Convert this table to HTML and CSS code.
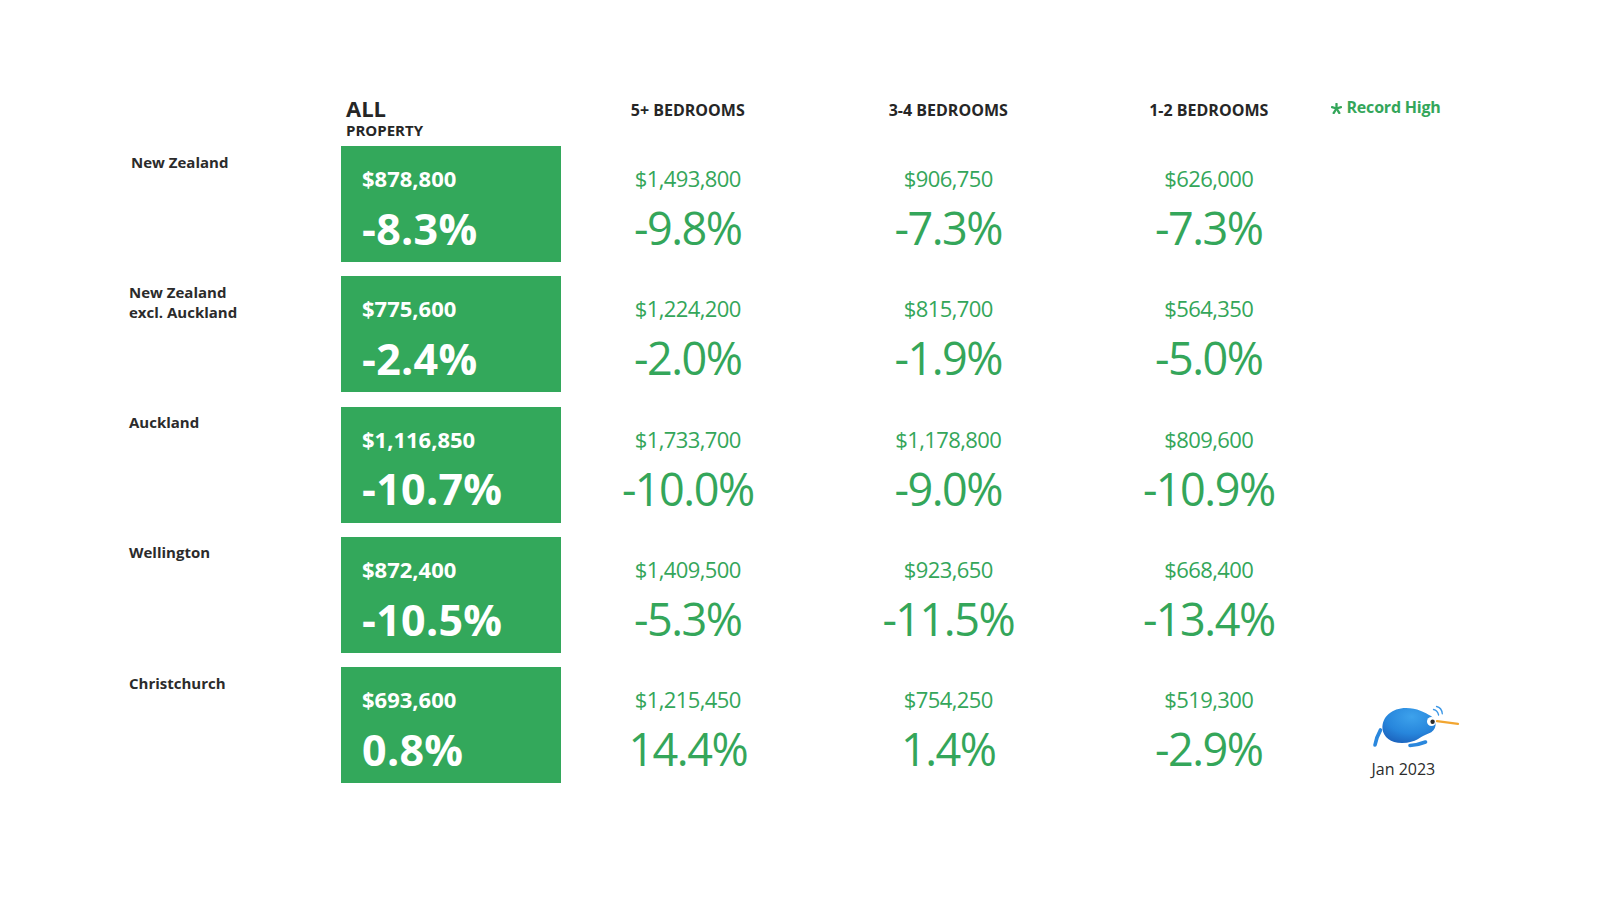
FILE: index.html
```html
<!DOCTYPE html>
<html lang="en">
<head>
<meta charset="utf-8">
<title>Property values by bedrooms</title>
<link rel="stylesheet" href="styles.css">
</head>
<body>
<main class="board">
  <div class="grid head">
    <div></div>
    <div class="all-head">
      <div class="all-title">ALL</div>
      <div class="all-sub">PROPERTY</div>
    </div>
    <div class="col-head">5+ BEDROOMS</div>
    <div class="col-head">3-4 BEDROOMS</div>
    <div class="col-head">1-2 BEDROOMS</div>
    <div class="legend">
      <svg class="star" width="11" height="11" viewBox="0 0 10 10" aria-hidden="true">
        <g stroke="#34a65a" stroke-width="2.1" stroke-linecap="round">
          <line x1="5" y1="5" x2="5" y2="0.8"/>
          <line x1="5" y1="5" x2="9.1" y2="3.7"/>
          <line x1="5" y1="5" x2="0.9" y2="3.7"/>
          <line x1="5" y1="5" x2="7.6" y2="9.1"/>
          <line x1="5" y1="5" x2="2.4" y2="9.1"/>
        </g>
      </svg>
      <span>Record High</span>
    </div>
  </div>

  <div class="grid body">
    <div class="label first">New Zealand</div>
    <div class="box"><div class="box-price">$878,800</div><div class="box-pct">-8.3%</div></div>
    <div class="val"><div class="price">$1,493,800</div><div class="pct">-9.8%</div></div>
    <div class="val"><div class="price">$906,750</div><div class="pct">-7.3%</div></div>
    <div class="val"><div class="price">$626,000</div><div class="pct">-7.3%</div></div>
    <div></div>

    <div class="label">New Zealand<br>excl. Auckland</div>
    <div class="box"><div class="box-price">$775,600</div><div class="box-pct">-2.4%</div></div>
    <div class="val"><div class="price">$1,224,200</div><div class="pct">-2.0%</div></div>
    <div class="val"><div class="price">$815,700</div><div class="pct">-1.9%</div></div>
    <div class="val"><div class="price">$564,350</div><div class="pct">-5.0%</div></div>
    <div></div>

    <div class="label">Auckland</div>
    <div class="box"><div class="box-price">$1,116,850</div><div class="box-pct">-10.7%</div></div>
    <div class="val"><div class="price">$1,733,700</div><div class="pct">-10.0%</div></div>
    <div class="val"><div class="price">$1,178,800</div><div class="pct">-9.0%</div></div>
    <div class="val"><div class="price">$809,600</div><div class="pct">-10.9%</div></div>
    <div></div>

    <div class="label">Wellington</div>
    <div class="box"><div class="box-price">$872,400</div><div class="box-pct">-10.5%</div></div>
    <div class="val"><div class="price">$1,409,500</div><div class="pct">-5.3%</div></div>
    <div class="val"><div class="price">$923,650</div><div class="pct">-11.5%</div></div>
    <div class="val"><div class="price">$668,400</div><div class="pct">-13.4%</div></div>
    <div></div>

    <div class="label">Christchurch</div>
    <div class="box"><div class="box-price">$693,600</div><div class="box-pct">0.8%</div></div>
    <div class="val"><div class="price">$1,215,450</div><div class="pct">14.4%</div></div>
    <div class="val"><div class="price">$754,250</div><div class="pct">1.4%</div></div>
    <div class="val"><div class="price">$519,300</div><div class="pct">-2.9%</div></div>
    <div class="brand">
      <svg class="kiwi" width="90" height="46" viewBox="0 0 90 46" aria-hidden="true">
        <defs>
          <radialGradient id="kb" cx="0.55" cy="0.25" r="0.8">
            <stop offset="0" stop-color="#3da2ec"/>
            <stop offset="0.6" stop-color="#2786dc"/>
            <stop offset="1" stop-color="#1c63bd"/>
          </radialGradient>
        </defs>
        <path d="M10.5 25 Q6.5 32 5 40" fill="none" stroke="#2a87dd" stroke-width="3.6" stroke-linecap="round"/>
        <path d="M40 40.5 Q48 40 55.5 37" fill="none" stroke="#2a87dd" stroke-width="3.6" stroke-linecap="round"/>
        <path d="M12.5 24 C11.5 12 22 3 36 3 C47 3 55 7.5 61 11 C68 15.5 67 26 58.5 28.5 C50.5 31 46.5 38 32 38 C20.5 38 13.5 32 12.5 24 Z" fill="url(#kb)"/>
        <line x1="67" y1="16.2" x2="88" y2="18.8" stroke="#f2a631" stroke-width="2.3" stroke-linecap="round"/>
        <circle cx="61.5" cy="16.5" r="4.5" fill="#fff"/>
        <circle cx="62.6" cy="16.8" r="2.2" fill="#2b2b2b"/>
        <path d="M63.5 4.5 Q67.5 5.2 68.6 10" fill="none" stroke="#3a96e6" stroke-width="1.3" stroke-linecap="round"/>
        <path d="M66.5 1.5 Q71.8 2.6 72.3 8.8" fill="none" stroke="#3a96e6" stroke-width="1.3" stroke-linecap="round"/>
      </svg>
      <div class="brand-date">Jan 2023</div>
    </div>
  </div>
</main>
</body>
</html>
```
FILE: styles.css
```css
* { box-sizing: border-box; }

html, body {
  margin: 0;
  padding: 0;
  background: #ffffff;
}

body {
  width: 1600px;
  height: 900px;
  overflow: hidden;
  font-family: "Open Sans", "Noto Sans", "Liberation Sans", sans-serif;
  color: #262626;
}

.board {
  padding: 97px 0 0 127px;
}

.grid {
  display: grid;
  grid-template-columns: 214px 220px repeat(3, 260.5px) 1fr;
}

.head {
  height: 49px;
}

.all-head {
  padding-left: 5px;
}

.all-title {
  font-size: 22px;
  line-height: 22px;
  font-weight: 700;
}

.all-sub {
  font-size: 15px;
  line-height: 18px;
  font-weight: 700;
  margin-top: 2px;
}

.col-head {
  padding-top: 4px;
  padding-right: 7px;
  text-align: center;
  font-size: 16px;
  line-height: 18px;
  font-weight: 700;
}

.legend {
  display: flex;
  align-items: flex-start;
  gap: 5px;
  margin-left: -12px;
  padding-top: 0.5px;
  color: #34a65a;
  font-size: 16px;
  line-height: 18px;
  font-weight: 700;
  letter-spacing: -0.2px;
}

.star {
  margin-top: 5.5px;
  flex: none;
}

.body {
  grid-auto-rows: 116px;
  row-gap: 14.25px;
}

.label {
  padding-top: 5.5px;
  padding-left: 2px;
  font-size: 15px;
  line-height: 20px;
  font-weight: 700;
  color: #2b2b2b;
}

.label.first {
  padding-left: 4px;
}

.box {
  background: #33a85b;
  color: #ffffff;
  padding: 19px 10px 0 21px;
  font-weight: 700;
}

.box-price {
  font-size: 22px;
  line-height: 26px;
}

.box-pct {
  margin-top: 13.8px;
  font-size: 43px;
  line-height: 48px;
  letter-spacing: 0.3px;
}

.val {
  padding-top: 19px;
  padding-right: 7px;
  text-align: center;
  color: #34a65a;
}

.price {
  font-size: 22px;
  line-height: 26px;
  letter-spacing: -0.6px;
}

.pct {
  margin-top: 13px;
  font-size: 45px;
  line-height: 48px;
  font-weight: 500;
  letter-spacing: -1.5px;
}

.brand {
  display: flex;
  flex-direction: column;
  align-items: flex-start;
  padding-left: 27.5px;
  padding-top: 38px;
}

.kiwi {
  display: block;
}

.brand-date {
  margin-top: 9px;
  margin-left: 1.5px;
  font-size: 16px;
  line-height: 18px;
  font-weight: 400;
  color: #2b2b2b;
}
```
